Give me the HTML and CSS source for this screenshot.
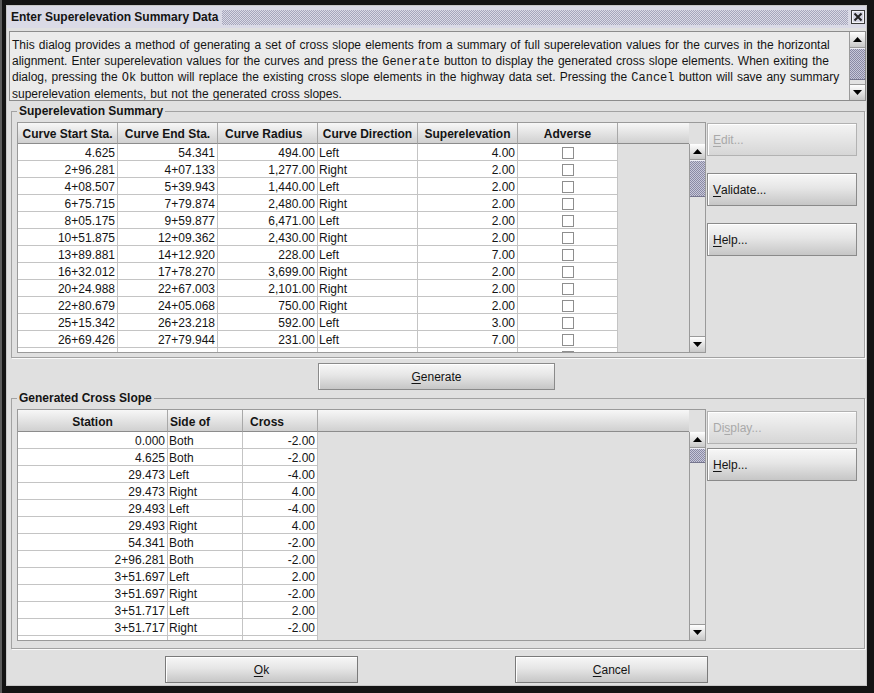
FILE: index.html
```html
<!DOCTYPE html>
<html>
<head>
<meta charset="utf-8">
<title>Enter Superelevation Summary Data</title>
<link rel="stylesheet" href="styles.css">
</head>
<body>
<div class="frame">
  <div class="dialog">
    <div class="titlebar">
      <span class="title">Enter Superelevation Summary Data</span>
      <span class="dots"></span>
      <span class="close">
        <svg width="14" height="14" viewBox="0 0 14 14"><rect x="0.5" y="0.5" width="13" height="13" fill="#d4d4e2" stroke="#3a3a3a"/><rect x="1.5" y="1.5" width="11" height="11" fill="none" stroke="#f4f4f8"/><path d="M3.5 3.5 L10.5 10.5 M10.5 3.5 L3.5 10.5" stroke="#222" stroke-width="2"/></svg>
      </span>
    </div>

    <div class="desc">
      <div class="desc-text">
        <div>This dialog provides a method of generating a set of cross slope elements from a summary of full superelevation values for the curves in the horizontal</div>
        <div>alignment. Enter superelevation values for the curves and press the <code>Generate</code> button to display the generated cross slope elements. When exiting the</div>
        <div>dialog, pressing the <code>Ok</code> button will replace the existing cross slope elements in the highway data set. Pressing the <code>Cancel</code> button will save any summary</div>
        <div>superelevation elements, but not the generated cross slopes.</div>
      </div>
      <div class="vscroll desc-scroll">
        <div class="sbtn up"><svg width="9" height="5" viewBox="0 0 9 5"><polygon points="0,5 9,5 4.5,0" fill="#000"/></svg></div>
        <div class="thumb t-desc"></div>
        <div class="sbtn down"><svg width="9" height="5" viewBox="0 0 9 5"><polygon points="0,0 9,0 4.5,5" fill="#000"/></svg></div>
      </div>
    </div>

    <fieldset class="group g1">
      <legend>Superelevation Summary</legend>
      <div class="group-body">
        <div class="pane p1">
          <div class="head h1">
            <div class="th">Curve Start Sta.</div>
            <div class="th">Curve End Sta.</div>
            <div class="th lp7">Curve Radius</div>
            <div class="th">Curve Direction</div>
            <div class="th">Superelevation</div>
            <div class="th">Adverse</div>
            <div class="th fill"></div>
          </div>
          <div class="corner"></div>
          <div class="rows">
            <div class="row r1"><div class="td">4.625</div><div class="td">54.341</div><div class="td">494.00</div><div class="td l">Left</div><div class="td">4.00</div><div class="td c"><span class="cb"></span></div></div>
            <div class="row r1"><div class="td">2+96.281</div><div class="td">4+07.133</div><div class="td">1,277.00</div><div class="td l">Right</div><div class="td">2.00</div><div class="td c"><span class="cb"></span></div></div>
            <div class="row r1"><div class="td">4+08.507</div><div class="td">5+39.943</div><div class="td">1,440.00</div><div class="td l">Left</div><div class="td">2.00</div><div class="td c"><span class="cb"></span></div></div>
            <div class="row r1"><div class="td">6+75.715</div><div class="td">7+79.874</div><div class="td">2,480.00</div><div class="td l">Right</div><div class="td">2.00</div><div class="td c"><span class="cb"></span></div></div>
            <div class="row r1"><div class="td">8+05.175</div><div class="td">9+59.877</div><div class="td">6,471.00</div><div class="td l">Left</div><div class="td">2.00</div><div class="td c"><span class="cb"></span></div></div>
            <div class="row r1"><div class="td">10+51.875</div><div class="td">12+09.362</div><div class="td">2,430.00</div><div class="td l">Right</div><div class="td">2.00</div><div class="td c"><span class="cb"></span></div></div>
            <div class="row r1"><div class="td">13+89.881</div><div class="td">14+12.920</div><div class="td">228.00</div><div class="td l">Left</div><div class="td">7.00</div><div class="td c"><span class="cb"></span></div></div>
            <div class="row r1"><div class="td">16+32.012</div><div class="td">17+78.270</div><div class="td">3,699.00</div><div class="td l">Right</div><div class="td">2.00</div><div class="td c"><span class="cb"></span></div></div>
            <div class="row r1"><div class="td">20+24.988</div><div class="td">22+67.003</div><div class="td">2,101.00</div><div class="td l">Right</div><div class="td">2.00</div><div class="td c"><span class="cb"></span></div></div>
            <div class="row r1"><div class="td">22+80.679</div><div class="td">24+05.068</div><div class="td">750.00</div><div class="td l">Right</div><div class="td">2.00</div><div class="td c"><span class="cb"></span></div></div>
            <div class="row r1"><div class="td">25+15.342</div><div class="td">26+23.218</div><div class="td">592.00</div><div class="td l">Left</div><div class="td">3.00</div><div class="td c"><span class="cb"></span></div></div>
            <div class="row r1"><div class="td">26+69.426</div><div class="td">27+79.944</div><div class="td">231.00</div><div class="td l">Left</div><div class="td">7.00</div><div class="td c"><span class="cb"></span></div></div>
            <div class="row r1"><div class="td"></div><div class="td"></div><div class="td"></div><div class="td l"></div><div class="td"></div><div class="td c"><span class="cb"></span></div></div>
          </div>
          <div class="vscroll">
            <div class="sbtn up"><svg width="9" height="5" viewBox="0 0 9 5"><polygon points="0,5 9,5 4.5,0" fill="#000"/></svg></div>
            <div class="thumb t1"></div>
            <div class="sbtn down"><svg width="9" height="5" viewBox="0 0 9 5"><polygon points="0,0 9,0 4.5,5" fill="#000"/></svg></div>
          </div>
        </div>
        <div class="side s1">
          <button class="btn side-btn disabled"><u>E</u>dit...</button>
          <button class="btn side-btn gap17"><u>V</u>alidate...</button>
          <button class="btn side-btn gap17"><u>H</u>elp...</button>
        </div>
      </div>
    </fieldset>

    <button class="btn gen"><u>G</u>enerate</button>

    <fieldset class="group g2">
      <legend>Generated Cross Slope</legend>
      <div class="group-body">
        <div class="pane p2">
          <div class="head h2">
            <div class="th">Station</div>
            <div class="th lp2">Side of</div>
            <div class="th lp7">Cross</div>
            <div class="th fill"></div>
          </div>
          <div class="corner"></div>
          <div class="rows">
            <div class="row r2"><div class="td">0.000</div><div class="td l">Both</div><div class="td">-2.00</div></div>
            <div class="row r2"><div class="td">4.625</div><div class="td l">Both</div><div class="td">-2.00</div></div>
            <div class="row r2"><div class="td">29.473</div><div class="td l">Left</div><div class="td">-4.00</div></div>
            <div class="row r2"><div class="td">29.473</div><div class="td l">Right</div><div class="td">4.00</div></div>
            <div class="row r2"><div class="td">29.493</div><div class="td l">Left</div><div class="td">-4.00</div></div>
            <div class="row r2"><div class="td">29.493</div><div class="td l">Right</div><div class="td">4.00</div></div>
            <div class="row r2"><div class="td">54.341</div><div class="td l">Both</div><div class="td">-2.00</div></div>
            <div class="row r2"><div class="td">2+96.281</div><div class="td l">Both</div><div class="td">-2.00</div></div>
            <div class="row r2"><div class="td">3+51.697</div><div class="td l">Left</div><div class="td">2.00</div></div>
            <div class="row r2"><div class="td">3+51.697</div><div class="td l">Right</div><div class="td">-2.00</div></div>
            <div class="row r2"><div class="td">3+51.717</div><div class="td l">Left</div><div class="td">2.00</div></div>
            <div class="row r2"><div class="td">3+51.717</div><div class="td l">Right</div><div class="td">-2.00</div></div>
            <div class="row r2"><div class="td"></div><div class="td l"></div><div class="td"></div></div>
          </div>
          <div class="vscroll">
            <div class="sbtn up"><svg width="9" height="5" viewBox="0 0 9 5"><polygon points="0,5 9,5 4.5,0" fill="#000"/></svg></div>
            <div class="thumb t2"></div>
            <div class="sbtn down"><svg width="9" height="5" viewBox="0 0 9 5"><polygon points="0,0 9,0 4.5,5" fill="#000"/></svg></div>
          </div>
        </div>
        <div class="side s2">
          <button class="btn side-btn disabled">Di<u>s</u>play...</button>
          <button class="btn side-btn gap4"><u>H</u>elp...</button>
        </div>
      </div>
    </fieldset>

    <div class="actions">
      <button class="btn wide"><u>O</u>k</button>
      <button class="btn wide"><u>C</u>ancel</button>
    </div>
  </div>
</div>
</body>
</html>
```

FILE: styles.css
```css
* { box-sizing: border-box; }

body {
  margin: 0;
  background: #141414;
  font-family: "Liberation Sans", Arial, sans-serif;
  font-size: 12px;
  color: #141414;
}

.frame {
  width: 874px;
  height: 693px;
  padding: 5px 7px 7px 4px;
  border-left: 2px solid #5c5c5c;
  background: #141414;
}

.dialog {
  height: 100%;
  border: 1px solid #c8c8c8;
  background: #e0e0e0;
  display: flex;
  flex-direction: column;
}

/* title bar */
.titlebar {
  flex: none;
  height: 22px;
  display: flex;
  align-items: center;
  padding: 0 1px 0 4px;
  background: #dadae6;
}
.title {
  font-weight: bold;
  padding-right: 4px;
  white-space: nowrap;
}
.dots {
  flex: 1;
  height: 15px;
  background: repeating-conic-gradient(#a6a6bc 0 25%, #dadae6 0 50%) 0 0 / 2px 2px;
}
.close {
  width: 14px;
  height: 14px;
  margin-left: 3px;
  display: block;
}
.close svg { display: block; }

/* description */
.desc {
  flex: none;
  height: 70px;
  margin: 3px 0 0 2px;
  border: 1px solid #8c8c8c;
  background: #ebebeb;
  display: flex;
}
.desc-text {
  flex: 1;
  padding: 6px 0 0 2px;
  font-size: 12px;
  word-spacing: 0.8px;
  line-height: 15.6px;
  white-space: nowrap;
  overflow: hidden;
}
code {
  font-family: "Liberation Mono", "Courier New", monospace;
  font-size: 12px;
}

/* scrollbars */
.vscroll {
  width: 16px;
  display: flex;
  flex-direction: column;
  border-left: 1px solid #9a9a9a;
  background: #e2e2e2;
}
.sbtn {
  flex: none;
  height: 16px;
  display: flex;
  align-items: center;
  justify-content: center;
  background: linear-gradient(#ffffff, #c8c8c8);
  border-bottom: 1px solid #9a9a9a;
}
.sbtn svg { display: block; }
.sbtn.down {
  margin-top: auto;
  border-bottom: none;
  border-top: 1px solid #9a9a9a;
}
.thumb {
  flex: none;
  background: repeating-conic-gradient(#8a8aa4 0 25%, #c8c8da 0 50%) 0 0 / 2px 2px;
  border-top: 1px solid #eeeef6;
  border-bottom: 1px solid #76768e;
}
.t-desc { height: 32px; }
.t1 { height: 37px; }
.t2 { height: 15px; }

/* group boxes */
.group {
  flex: none;
  min-width: 0;
  margin: 3px 1px 0 4px;
  padding: 4px 7px 4px 5px;
  border: 1px solid #a2a2a2;
  box-shadow: 1px 1px 0 #fafafa;
}
.group legend {
  font-weight: bold;
  padding: 0 2px;
  line-height: 14px;
}
.g2 {
  margin-top: 1px;
  padding-bottom: 7px;
}
.group-body {
  display: flex;
  align-items: flex-start;
}

/* table panes */
.pane {
  width: 689px;
  border: 1px solid #9a9a9a;
  display: grid;
  grid-template-columns: 671px 16px;
}
.p1 {
  height: 231px;
  grid-template-rows: 21px 208px;
}
.p2 {
  height: 232px;
  grid-template-rows: 22px 208px;
}
.corner { background: #e0e0e0; }

.head { display: grid; }
.h1 { grid-template-columns: repeat(6, 100px) 1fr; }
.h2 { grid-template-columns: 150px 75px 75px 1fr; }

.th {
  font-weight: bold;
  text-align: center;
  white-space: nowrap;
  overflow: hidden;
  padding-top: 2px;
  border-right: 1px solid #a8a8a8;
  border-bottom: 1px solid #8c8c8c;
  background: linear-gradient(#f7f7f7, #d0d0d0);
  display: flex;
  align-items: center;
  justify-content: center;
}
.th.lp7 { justify-content: flex-start; padding-left: 7px; }
.th.lp2 { justify-content: flex-start; padding-left: 2px; }
.th.fill { border-right: none; }

.rows {
  background: #e0e0e0;
  overflow: hidden;
}
.row {
  display: grid;
  height: 17px;
}
.r1 { grid-template-columns: repeat(6, 100px); width: 600px; }
.r2 { grid-template-columns: 150px 75px 75px; width: 300px; }

.td {
  height: 17px;
  line-height: 16px;
  padding: 1px 2px 0 0;
  text-align: right;
  white-space: nowrap;
  overflow: hidden;
  background: #ffffff;
  border-right: 1px solid #c4c4c4;
  border-bottom: 1px solid #c4c4c4;
}
.td.l { text-align: left; padding: 1px 0 0 1px; }
.td.c { padding: 0; }
.cb {
  display: block;
  width: 12px;
  height: 12px;
  margin: 3px auto 0;
  border: 1px solid #8e8e8e;
  background: #ffffff;
}

/* buttons */
.btn {
  font-family: "Liberation Sans", Arial, sans-serif;
  font-size: 12px;
  color: #141414;
  display: flex;
  align-items: center;
  justify-content: center;
  padding: 1px 5px 0;
  margin: 0;
  border: 1px solid #8a8a8a;
  border-radius: 0;
  background: linear-gradient(#f7f7f7 0%, #e6e6e6 45%, #c6c6c6 100%);
  box-shadow: inset 1px 1px 0 #ffffff;
}
.btn u { text-decoration-thickness: 1px; text-underline-offset: 2px; }

.side {
  width: 150px;
  margin-left: 1px;
  display: flex;
  flex-direction: column;
}
.side-btn {
  height: 33px;
  justify-content: flex-start;
}
.s1 .side-btn:first-child { margin-top: 1px; }
.s2 .side-btn:first-child { margin-top: 2px; }
.gap17 { margin-top: 17px; }
.gap4 { margin-top: 4px; }
.btn.disabled {
  color: #a9a9a9;
  border-color: #b2b2b2;
  background: linear-gradient(#f4f4f4, #d6d6d6);
}

.gen {
  flex: none;
  width: 237px;
  height: 27px;
  margin: 5px auto 0;
}

.actions {
  flex: none;
  height: 27px;
  margin-top: 7px;
  display: flex;
  justify-content: center;
  gap: 157px;
}
.wide {
  width: 193px;
  height: 27px;
  border-color: #7a7a7a;
}
```
